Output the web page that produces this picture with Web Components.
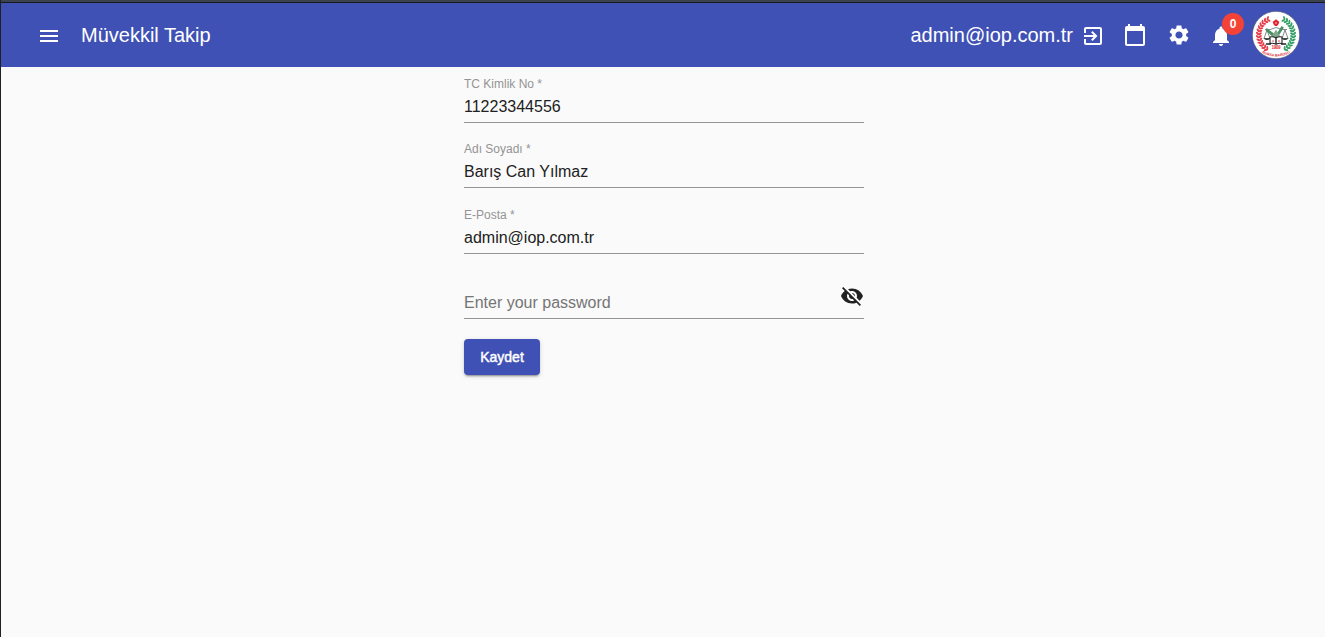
<!DOCTYPE html>
<html lang="tr">
<head>
<meta charset="utf-8">
<title>Müvekkil Takip</title>
<style>
html,body{margin:0;height:100%;overflow:hidden;background:#fafafa;font-family:Arial,"Liberation Sans",sans-serif}
</style>
</head>
<body>
<client-app></client-app>
<script>
const define=(name,html)=>customElements.define(name,class extends HTMLElement{
  constructor(){
    super();
    const t=document.createElement('template');
    t.innerHTML=html;
    this.attachShadow({mode:'open'}).append(t.content.cloneNode(true));
  }
});

const ICONS={
  menu:'<path d="M3 18h18v-2H3v2zm0-5h18v-2H3v2zm0-7v2h18V6H3z"/>',
  exit:'<path d="M10.09 15.59L11.5 17l5-5-5-5-1.41 1.41L12.67 11H3v2h9.67l-2.58 2.59zM19 3H5c-1.11 0-2 .9-2 2v4h2V5h14v14H5v-4H3v4c0 1.1.89 2 2 2h14c1.1 0 2-.9 2-2V5c0-1.1-.9-2-2-2z"/>',
  calendar:'<path d="M20 3h-1V1h-2v2H7V1H5v2H4c-1.1 0-2 .9-2 2v16c0 1.1.9 2 2 2h16c1.1 0 2-.9 2-2V5c0-1.1-.9-2-2-2zm0 18H4V8h16v13z"/>',
  settings:'<path d="M19.14 12.94c.04-.3.06-.61.06-.94 0-.32-.02-.64-.07-.94l2.03-1.58c.18-.14.23-.41.12-.61l-1.92-3.32c-.12-.22-.37-.29-.59-.22l-2.39.96c-.5-.38-1.03-.7-1.62-.94l-.36-2.54c-.04-.24-.24-.41-.48-.41h-3.84c-.24 0-.43.17-.47.41l-.36 2.54c-.59.24-1.13.57-1.62.94l-2.39-.96c-.22-.08-.47 0-.59.22L2.74 8.87c-.12.21-.08.47.12.61l2.03 1.58c-.05.3-.09.63-.09.94s.02.64.07.94l-2.03 1.58c-.18.14-.23.41-.12.61l1.92 3.32c.12.22.37.29.59.22l2.39-.96c.5.38 1.03.7 1.62.94l.36 2.54c.05.24.24.41.48.41h3.84c.24 0 .44-.17.47-.41l.36-2.54c.59-.24 1.13-.56 1.62-.94l2.39.96c.22.08.47 0 .59-.22l1.92-3.32c.12-.22.07-.47-.12-.61l-2.01-1.58zM12 15.6c-1.98 0-3.6-1.62-3.6-3.6s1.62-3.6 3.6-3.6 3.6 1.62 3.6 3.6-1.62 3.6-3.6 3.6z"/>',
  bell:'<path d="M12 22c1.1 0 2-.9 2-2h-4c0 1.1.89 2 2 2zm6-6v-5c0-3.07-1.64-5.64-4.5-6.32V4c0-.83-.67-1.5-1.5-1.5s-1.5.67-1.5 1.5v.68C7.63 5.36 6 7.92 6 11v5l-2 2v1h16v-1l-2-2z"/>',
  hidden:'<path d="M12 7c2.76 0 5 2.24 5 5 0 .65-.13 1.26-.36 1.83l2.92 2.92c1.51-1.26 2.7-2.89 3.43-4.75-1.73-4.39-6-7.5-11-7.5-1.4 0-2.74.25-3.98.7l2.16 2.16C10.74 7.13 11.35 7 12 7zM2 4.27l2.28 2.28.46.46C3.08 8.3 1.78 10.02 1 12c1.73 4.39 6 7.5 11 7.5 1.55 0 3.03-.3 4.38-.84l.42.42L19.73 22 21 20.73 3.27 3 2 4.27zM7.53 9.8l1.55 1.55c-.05.21-.08.43-.08.65 0 1.66 1.34 3 3 3 .22 0 .44-.03.65-.08l1.55 1.55c-.67.33-1.41.53-2.2.53-2.76 0-5-2.24-5-5 0-.79.2-1.53.53-2.2zm4.31-.78l3.15 3.15.02-.16c0-1.66-1.34-3-3-3l-.17.01z"/>'
};
customElements.define('md-icon',class extends HTMLElement{
  constructor(){
    super();
    this.attachShadow({mode:'open'}).innerHTML=`<style>:host{display:block;width:24px;height:24px;flex:none}svg{display:block;width:100%;height:100%;fill:currentColor}</style><svg viewBox="0 0 24 24">${ICONS[this.getAttribute('name')]||''}</svg>`;
  }
});

/* One side of the laurel: paired leaves fanning off a stem; the other side is mirrored. */
const laurel=(color,dir)=>{
  let s='';
  for(let i=0;i<13;i++){
    const d=22+i*10, a=d*Math.PI/180;
    const x=24+dir*17.2*Math.sin(a), y=23.6-17.2*Math.cos(a);
    s+=`<g transform="translate(${x.toFixed(2)} ${y.toFixed(2)}) rotate(${(dir*d).toFixed(1)})"><ellipse cy="-1.9" rx="2.1" ry="1" transform="rotate(${dir*50})"/><ellipse cy="1.9" rx="2.1" ry="1" transform="rotate(${-dir*50})"/></g>`;
  }
  return `<g fill="${color}">${s}</g>`;
};
define('bar-emblem',`<style>:host{display:block;width:48px;height:48px;flex:none}svg{display:block}text{font-family:"Liberation Sans",Arial,sans-serif;font-weight:bold;fill:#e0303c}</style>
<svg width="48" height="48" viewBox="0 0 48 48">
<circle cx="24" cy="24" r="23.7" fill="#fff" stroke="#454b68" stroke-width=".6"/>
${laurel('#e63c48',-1)}${laurel('#35a065',1)}
<path d="M24 8.3l1.8 1.4 1.5 1-.8 2.5-1.5 1.9h-2l-1.5-1.9-.8-2.5 1.5-1z" fill="#e5202c"/>
<circle cx="24" cy="12" r=".7" fill="#fff"/>
<g fill="none" stroke="#626b69" stroke-width=".8"><path d="M13 18.5q5 1 11-2 6 3 11 2M15 19l-3 8.5h6zM33 19l-3 8.5h6z"/></g>
<path d="M11.5 27.2h7q-3.5 3.8-7 0zM29.5 27.2h7q-3.5 3.8-7 0z" fill="#303735"/>
<path d="M14.5 17l9.5 7 5.5-9 2.4 1.4-6.6 10.5-3.2.2-8.4-7.6z" fill="#4b9065"/>
<path d="M24 18.5l4.5 7.5h-9z" fill="#82a58c"/>
<path d="M18 26q3-.8 6 .7 3-1.5 6-.7v6.5q-3-.8-6 .7-3-1.5-6-.7z" fill="#fff" stroke="#222" stroke-width="1.1"/>
<path d="M24 26v7M14 33h5M29 33h5" stroke="#222" stroke-width="1.4"/>
<path d="M20 30h2M26 30h2" stroke="#d85a60" stroke-width="1"/>
<text x="24" y="37.8" text-anchor="middle" font-size="4.6" textLength="9">1909</text>
<path id="arc" d="M9.5 41.8Q24 49.2 38.5 41.8" fill="none"/>
<text font-size="3.6"><textPath href="#arc" startOffset="50%" text-anchor="middle">BURSA BAROSU</textPath></text>
</svg>`);

define('notification-bell',`<style>
:host{display:block;position:relative;width:24px;height:24px;flex:none}
md-icon{position:relative;top:1px}
span{position:absolute;left:13px;top:-10px;width:22px;height:22px;border-radius:50%;background:#f44336;color:#fff;font:bold 12px/22px "Liberation Sans",Arial,sans-serif;text-align:center}
</style><md-icon name="bell"></md-icon><span><slot></slot></span>`);

define('app-toolbar',`<style>
:host{display:flex;align-items:center;height:64px;box-sizing:border-box;padding:0 25.5px 0 36px;background:#3f51b5;color:#fff;font-size:20px;line-height:24px;white-space:nowrap}
h1{font:inherit;margin:0 0 0 20px}
md-icon[name=menu],.exit{margin-top:2px}
.space{flex:1}.exit{margin-left:8px}.cal{margin-left:18px}.set{margin-left:20px}.bell{margin-left:18px}.logo{margin-left:18.5px}
</style>
<md-icon name="menu"></md-icon><h1><slot></slot></h1><div class="space"></div>
<slot name="user"></slot><md-icon class="exit" name="exit"></md-icon><md-icon class="cal" name="calendar"></md-icon><md-icon class="set" name="settings"></md-icon>
<notification-bell class="bell">0</notification-bell><bar-emblem class="logo"></bar-emblem>`);

define('form-field',`<style>
:host{display:flex;flex-direction:column;height:65.4px;box-sizing:border-box}
.label{height:14px;margin-top:10px;font-size:12px;line-height:14px;color:#949494}
.row{display:flex;height:18px;margin-top:7px;justify-content:space-between;font-size:16px;line-height:18px;color:#212121}
:host([empty]) .row{color:#757575}
.line{height:1px;margin-top:6px;background:#949494}
::slotted(md-icon){margin:-10px 0 0 0;color:#212121}
</style><div class="label"><slot name="label"></slot></div><div class="row"><slot></slot><slot name="suffix"></slot></div><div class="line"></div>`);

define('raised-button',`<style>
:host{display:block}
button{display:block;width:76px;height:36px;padding:0;border:0;border-radius:4px;background:#3f51b5;color:#fff;font:14px/36px "Liberation Sans",Arial,sans-serif;-webkit-text-stroke:.45px #fff;box-shadow:0 3px 1px -2px rgba(0,0,0,.2),0 2px 2px 0 rgba(0,0,0,.14),0 1px 5px 0 rgba(0,0,0,.12)}
</style><button><slot></slot></button>`);

define('profile-form',`<style>:host{display:block;width:400px;margin:0 auto}raised-button{margin-top:10px}</style>
<form-field><span slot="label">TC Kimlik No *</span><span>11223344556</span></form-field>
<form-field><span slot="label">Adı Soyadı *</span><span>Barış Can Yılmaz</span></form-field>
<form-field><span slot="label">E-Posta *</span><span>admin@iop.com.tr</span></form-field>
<form-field empty><span>Enter your password</span><md-icon slot="suffix" name="hidden"></md-icon></form-field>
<raised-button>Kaydet</raised-button>`);

define('client-app',`<style>
:host{display:block;height:100vh;box-sizing:border-box;border-left:1px solid #202124;background:#fafafa}
.edge{height:2px;background:#3b4350;border-bottom:1px solid #17191c}
main{padding-left:2px}
</style><div class="edge"></div>
<app-toolbar>Müvekkil Takip<span slot="user">admin@iop.com.tr</span></app-toolbar>
<main><profile-form></profile-form></main>`);
</script>
</body>
</html>
